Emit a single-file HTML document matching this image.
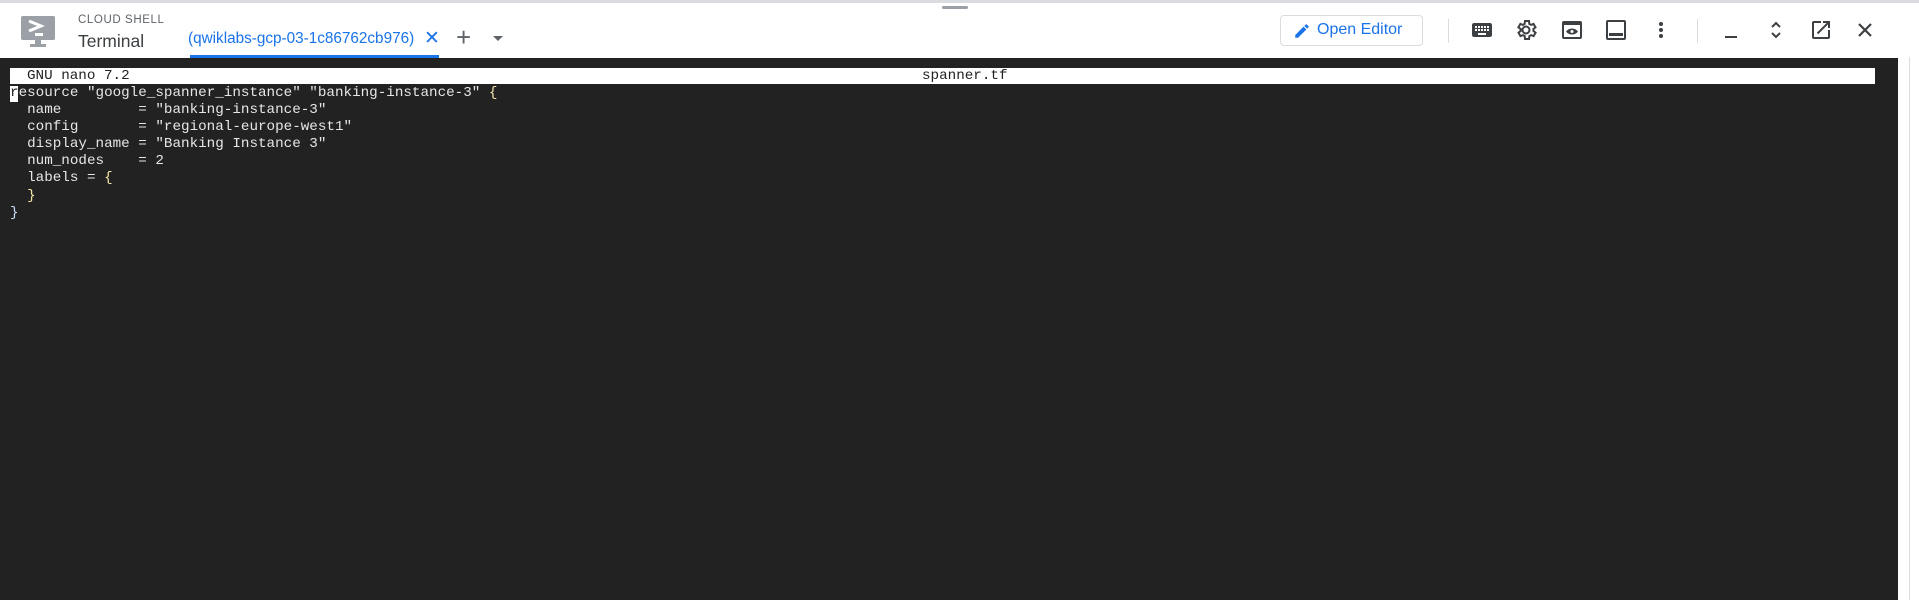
<!DOCTYPE html>
<html><head><meta charset="utf-8"><style>
*{margin:0;padding:0;box-sizing:border-box}
body{width:1919px;height:600px;overflow:hidden;background:#fff;font-family:"Liberation Sans",sans-serif;position:relative}
.a{position:absolute}
.ic{position:absolute;top:18px;width:24px;height:24px}
.term{left:0;top:58px;width:1898px;height:542px;background:#222}
.mono{font-family:"Liberation Mono",monospace;font-size:14.25px;white-space:pre;color:#e6e6e6;line-height:17.1px}
</style></head><body>
<div class="a" style="left:0;top:0;width:1919px;height:3px;background:#dadce0"></div>
<div class="a" style="left:942px;top:6px;width:26px;height:3px;background:#9aa0a6;border-radius:2px"></div>
<svg class="a" style="left:20px;top:15px" width="36" height="34" viewBox="0 0 36 34"><rect x="1" y="1" width="34" height="24" rx="2" fill="#9aa0a6"/><path d="M9 6l12 5-12 5" stroke="#fff" stroke-width="3" fill="none"/><rect x="15" y="18" width="8" height="3" fill="#fff"/><rect x="15" y="25" width="6" height="4" fill="#9aa0a6"/><rect x="10" y="29" width="16" height="3" fill="#9aa0a6"/></svg>
<div class="a" style="left:78px;top:14px;font-size:11.5px;color:#5f6368;letter-spacing:.6px">CLOUD SHELL</div>
<div class="a" style="left:78px;top:31px;font-size:17.5px;color:#3c4043">Terminal</div>
<div class="a" style="left:188px;top:30px;font-size:15.3px;color:#1a73e8">(qwiklabs-gcp-03-1c86762cb976)</div>
<div class="a" style="left:424px;top:27px;font-size:19px;color:#1a73e8">✕</div>
<div class="a" style="left:190px;top:55px;width:249px;height:3px;background:#1a73e8"></div>
<div class="a" style="left:456px;top:22px;font-size:26px;color:#5f6368;font-weight:300">+</div>
<div class="a" style="left:493px;top:36px;width:0;height:0;border-left:5px solid transparent;border-right:5px solid transparent;border-top:5px solid #5f6368"></div>
<div class="a" style="left:1280px;top:15px;width:143px;height:31px;border:1px solid #dadce0;border-radius:4px"></div>
<svg class="a" style="left:1293px;top:22px" width="18" height="18" viewBox="0 0 24 24"><path d="M3 17.25V21h3.75L17.8 9.94l-3.75-3.75L3 17.25zM20.7 7.04a1 1 0 000-1.41l-2.34-2.34a1 1 0 00-1.41 0l-1.83 1.83 3.75 3.75 1.83-1.83z" fill="#1a73e8"/></svg>
<div class="a" style="left:1317px;top:21px;font-size:16px;color:#1a73e8">Open Editor</div>
<div class="a" style="left:1448px;top:19px;width:1px;height:24px;background:#dadce0"></div>
<div class="a" style="left:1697px;top:19px;width:1px;height:24px;background:#dadce0"></div>
<svg class="ic" style="left:1470px" viewBox="0 0 24 24"><path d="M20 5H4c-1.1 0-2 .9-2 2v10c0 1.1.9 2 2 2h16c1.1 0 2-.9 2-2V7c0-1.1-.9-2-2-2zm-9 3h2v2h-2V8zm0 3h2v2h-2v-2zM8 8h2v2H8V8zm0 3h2v2H8v-2zm-1 2H5v-2h2v2zm0-3H5V8h2v2zm9 7H8v-2h8v2zm0-4h-2v-2h2v2zm0-3h-2V8h2v2zm3 3h-2v-2h2v2zm0-3h-2V8h2v2z" fill="#3c4043"/></svg>
<svg class="ic" style="left:1514px" viewBox="0 0 24 24"><path d="M19.4 13a7.5 7.5 0 000-2l2.1-1.6-2-3.5-2.5 1a7 7 0 00-1.7-1L15 3h-4l-.4 2.9a7 7 0 00-1.7 1l-2.5-1-2 3.5L6.6 11a7.5 7.5 0 000 2l-2.1 1.6 2 3.5 2.5-1a7 7 0 001.7 1L11 21h4l.4-2.9a7 7 0 001.7-1l2.5 1 2-3.5zM12 15.5a3.5 3.5 0 110-7 3.5 3.5 0 010 7z" fill="none" stroke="#3c4043" stroke-width="2"/></svg>
<svg class="ic" style="left:1560px" viewBox="0 0 24 24"><rect x="3" y="4" width="18" height="16" rx="1" fill="none" stroke="#3c4043" stroke-width="2"/><rect x="3" y="4" width="18" height="3" fill="#3c4043"/><path d="M6 13.5c3-4 9-4 12 0-3 4-9 4-12 0z" fill="#3c4043"/><circle cx="12" cy="13.5" r="1.5" fill="#fff"/></svg>
<svg class="ic" style="left:1604px" viewBox="0 0 24 24"><rect x="3" y="3" width="18" height="18" rx="1" fill="none" stroke="#3c4043" stroke-width="2"/><rect x="5" y="15" width="14" height="3" fill="#3c4043"/></svg>
<svg class="ic" style="left:1649px" viewBox="0 0 24 24"><circle cx="12" cy="6" r="2" fill="#3c4043"/><circle cx="12" cy="12" r="2" fill="#3c4043"/><circle cx="12" cy="18" r="2" fill="#3c4043"/></svg>
<svg class="ic" style="left:1719px" viewBox="0 0 24 24"><rect x="6" y="18" width="12" height="2" fill="#3c4043"/></svg>
<svg class="ic" style="left:1764px" viewBox="0 0 24 24"><path d="M8 9l4-4 4 4M8 15l4 4 4-4" fill="none" stroke="#3c4043" stroke-width="2"/></svg>
<svg class="ic" style="left:1809px" viewBox="0 0 24 24"><path d="M19 19H5V5h7V3H5a2 2 0 00-2 2v14a2 2 0 002 2h14a2 2 0 002-2v-7h-2v7zM14 3v2h3.6l-9.8 9.8 1.4 1.4L19 6.4V10h2V3h-7z" fill="#3c4043"/></svg>
<svg class="ic" style="left:1853px" viewBox="0 0 24 24"><path d="M6 6l12 12M18 6L6 18" stroke="#3c4043" stroke-width="2.2"/></svg>
<div class="a term"></div>
<div class="a" style="left:1909px;top:57px;width:1px;height:543px;background:#dadce0"></div>
<div class="a" style="left:10px;top:68px;width:1865px;height:16px;background:#fff"></div>
<div class="a mono" style="left:27px;top:68px;color:#222">GNU nano 7.2</div>
<div class="a mono" style="left:922px;top:68px;color:#222">spanner.tf</div>
<div class="a" style="left:10px;top:86px;width:8px;height:16px;background:#fff"></div>
<div class="a mono" style="left:10px;top:85px"><span style="color:#222">r</span>esource "google_spanner_instance" "banking-instance-3" <span style="color:#f3e6a8">{</span>
  name         = "banking-instance-3"
  config       = "regional-europe-west1"
  display_name = "Banking Instance 3"
  num_nodes    = 2
  labels = <span style="color:#f3e6a8">{</span>
  <span style="color:#f3e6a8">}</span>
<span style="color:#c8d8f8">}</span></div>
</body></html>
